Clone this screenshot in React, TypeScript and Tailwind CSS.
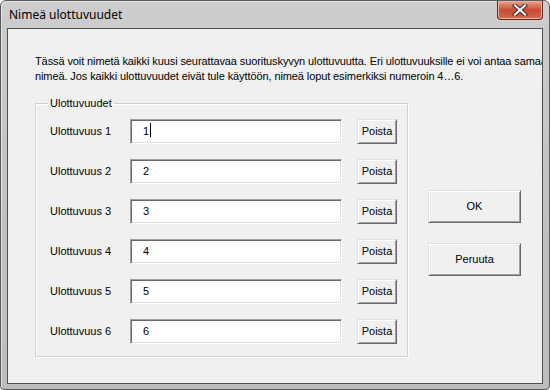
import React from 'react';

// Six dimension rows, the first one has the text cursor
const rows = ['1', '2', '3', '4', '5', '6'];

const FONT = { fontFamily: '"Liberation Sans", Arial, sans-serif' };

function CloseGlyph() {
  return (
    <svg width="16" height="12" viewBox="0 0 16 12">
      <path d="M3 1.5 L13 10.5 M13 1.5 L3 10.5" stroke="#4a2a24" strokeWidth="4.2" strokeLinecap="square" />
      <path d="M3 1.5 L13 10.5 M13 1.5 L3 10.5" stroke="#ffffff" strokeWidth="2.2" strokeLinecap="square" />
    </svg>
  );
}

function SunkenField({ value, caret }: { value: string; caret?: boolean }) {
  return (
    <div className="w-[212px] h-[25px] bg-white border border-[#a0a0a0] border-r-white border-b-white shadow-[inset_1px_1px_0_#696969,inset_-1px_-1px_0_#e3e3e3] pl-[12px] pt-[4px] text-[11px] leading-[14px] text-black flex items-start">
      <span>{value}</span>
      {caret && <span className="ml-[1px] mt-[-1px] w-px h-[14px] bg-black" />}
    </div>
  );
}

function RaisedButton({ label, className }: { label: string; className: string }) {
  return (
    <button
      className={`${className} bg-[#f0f0f0] border border-[#e3e3e3] border-r-[#696969] border-b-[#696969] shadow-[inset_1px_1px_0_#ffffff,inset_-1px_-1px_0_#a0a0a0] text-[11px] text-black flex items-center justify-center`}
      style={FONT}
    >
      {label}
    </button>
  );
}

export default function App() {
  return (
    <div className="w-[550px] h-[390px] bg-white" style={FONT}>
      <div className="w-full h-full flex flex-col rounded-t-[6px] rounded-b-[4px] border border-[#5a5a5a] bg-gradient-to-b from-[#cdcdcd] via-[#c2c2c2] to-[#bdbdbd] shadow-[inset_1px_1px_0_#e4e4e4]">
        {/* title bar */}
        <div className="h-[27px] flex items-start justify-between shrink-0">
          <div
            className="pl-[8px] pt-[6px] text-[12px] leading-[16px] text-black"
            style={{ fontFamily: '"Noto Sans", "Open Sans", sans-serif' }}
          >
            Nimeä ulottuvuudet
          </div>
          <div className="mr-[6px] w-[46px] h-[19px] rounded-b-[4px] border border-t-0 border-[#5b2a22] bg-gradient-to-b from-[#e8a291] via-[#c94c34] to-[#d3684c] flex items-center justify-center shadow-[inset_0_0_0_1px_#eeb5a6]">
            <CloseGlyph />
          </div>
        </div>

        {/* client area */}
        <div className="mx-[6px] mb-[5px] flex-1 border border-[#505050] bg-[#f0f0f0] overflow-hidden pl-[27px] pt-[25px]">
          <p className="whitespace-nowrap text-[11px] leading-[15px] tracking-[-0.1px] text-black">
            Tässä voit nimetä kaikki kuusi seurattavaa suorituskyvyn ulottuvuutta. Eri ulottuvuuksille ei voi antaa samaa
            <br />
            nimeä. Jos kaikki ulottuvuudet eivät tule käyttöön, nimeä loput esimerkiksi numeroin 4…6.
          </p>

          <div className="flex mt-[12px]">
            <fieldset className="w-[373px] h-[261px] border border-[#d0d0d0] shadow-[inset_1px_1px_0_#ffffff,1px_1px_0_#ffffff] pl-[14px] pr-[10px]">
              <legend className="ml-[-2px] px-[2px] text-[11px] leading-[14px] text-black">Ulottuvuudet</legend>
              <div className="flex flex-col gap-[15px] pt-[9px]">
                {rows.map((r, i) => (
                  <div key={r} className="flex items-center h-[25px]">
                    <span className="w-[80px] text-[11px] text-black">Ulottuvuus {r}</span>
                    <SunkenField value={r} caret={i === 0} />
                    <RaisedButton label="Poista" className="ml-[15px] w-[40px] h-[25px]" />
                  </div>
                ))}
              </div>
            </fieldset>

            <div className="ml-[20px] mt-[94px] flex flex-col gap-[20px]">
              <RaisedButton label="OK" className="w-[93px] h-[33px]" />
              <RaisedButton label="Peruuta" className="w-[93px] h-[33px]" />
            </div>
          </div>
        </div>
      </div>
    </div>
  );
}
